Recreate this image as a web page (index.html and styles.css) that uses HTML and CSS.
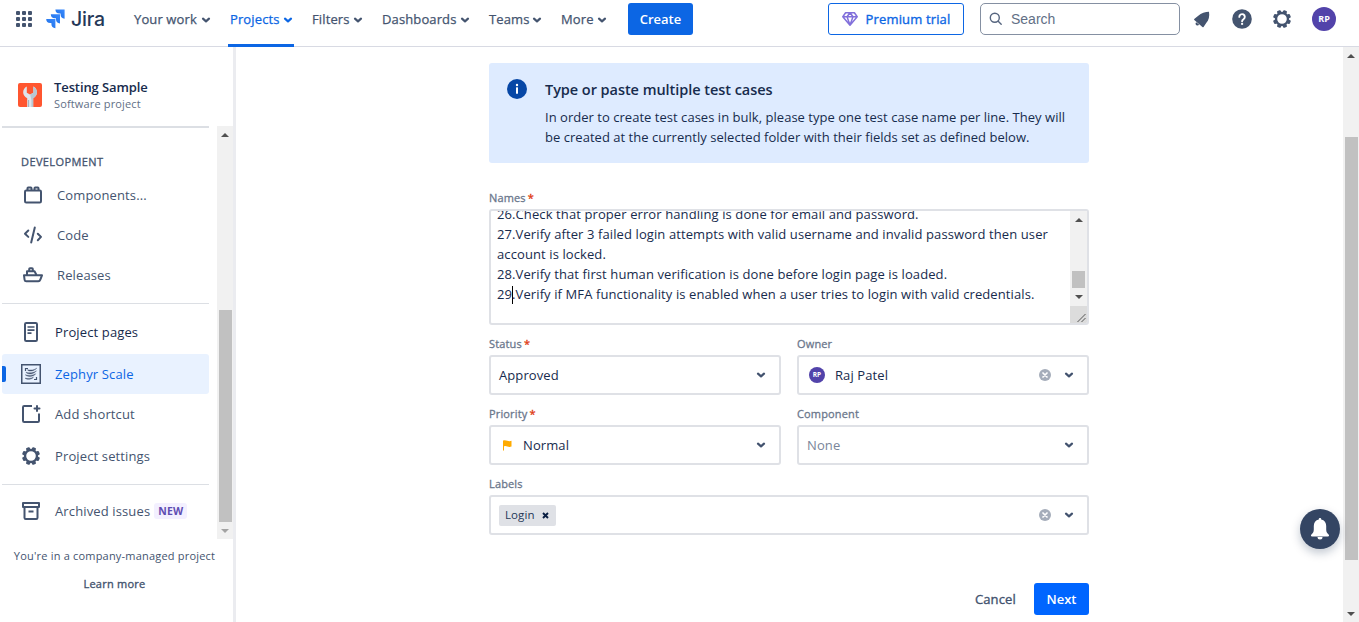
FILE: index.html
```
<!DOCTYPE html>
<html lang="en">
<head>
<meta charset="utf-8">
<title>Testing Sample - Zephyr Scale</title>
<link rel="stylesheet" href="styles.css">
</head>
<body>
<svg class="defs" width="0" height="0">
  <symbol id="chev" viewBox="0 0 10 8"><path d="M2 2.700 5 5.300 8 2.700" fill="none" stroke="currentColor" stroke-width="2.200" stroke-linecap="round" stroke-linejoin="round"/></symbol>
  <symbol id="up" viewBox="0 0 8 4"><path d="M4 0 8 4H0z" fill="currentColor"/></symbol>
  <symbol id="down" viewBox="0 0 8 4"><path d="M0 0H8L4 4z" fill="currentColor"/></symbol>
  <symbol id="gear" viewBox="0 0 20 20"><circle cx="10" cy="10" r="6" fill="none" stroke="currentColor" stroke-width="2.400"/><g fill="currentColor"><g id="teeth"><rect x="8" y="1" width="4" height="3.300" rx="1" transform="rotate(22.5 10 10)"/><rect x="8" y="1" width="4" height="3.300" rx="1" transform="rotate(67.5 10 10)"/><rect x="8" y="1" width="4" height="3.300" rx="1" transform="rotate(112.5 10 10)"/><rect x="8" y="1" width="4" height="3.300" rx="1" transform="rotate(157.5 10 10)"/></g><use href="#teeth" transform="rotate(180 10 10)"/></g></symbol>
  <symbol id="clear" viewBox="0 0 12 12"><circle cx="6" cy="6" r="6" fill="#a5adba"/><path d="M4 4 8 8M8 4 4 8" stroke="#fff" stroke-width="1.7" stroke-linecap="round"/></symbol>
</svg>

<header class="topbar">
  <svg class="switcher" width="16" height="16" viewBox="0 0 16 16" fill="#44546f"><rect width="4" height="4" rx="1"/><rect x="6" width="4" height="4" rx="1"/><rect x="12" width="4" height="4" rx="1"/><rect y="6" width="4" height="4" rx="1"/><rect x="6" y="6" width="4" height="4" rx="1"/><rect x="12" y="6" width="4" height="4" rx="1"/><rect y="12" width="4" height="4" rx="1"/><rect x="6" y="12" width="4" height="4" rx="1"/><rect x="12" y="12" width="4" height="4" rx="1"/></svg>
  <a class="brand">
    <svg width="20" height="20" viewBox="0 0 20 20"><defs><linearGradient id="jg" x1="1" y1="0" x2="0" y2="1"><stop offset="0" stop-color="#3a8bff"/><stop offset=".5" stop-color="#2a7bf0"/><stop offset="1" stop-color="#1d6fe8"/></linearGradient></defs><g fill="url(#jg)"><path d="M9.400.5H18.600v9.300a4.300 4.300 0 0 1-4-4.200V4.500h-1.200A4.100 4.100 0 0 1 9.400.5z"/><path d="M4.800 5.200H14v9.300a4.300 4.300 0 0 1-4-4.200V9.200H8.800a4.100 4.100 0 0 1-4-4z"/><path d="M.2 9.900h9.200v9.300a4.300 4.300 0 0 1-4-4.200v-1.100H4.200a4.100 4.100 0 0 1-4-4z"/></g></svg>
    <span>Jira</span>
  </a>
  <nav class="mainnav">
    <a class="n-your">Your work<svg><use href="#chev"/></svg></a>
    <a class="n-proj active">Projects<svg><use href="#chev"/></svg></a>
    <a class="n-filt">Filters<svg><use href="#chev"/></svg></a>
    <a class="n-dash">Dashboards<svg><use href="#chev"/></svg></a>
    <a class="n-team">Teams<svg><use href="#chev"/></svg></a>
    <a class="n-more">More<svg><use href="#chev"/></svg></a>
  </nav>
  <button class="create">Create</button>
  <button class="premium"><svg width="16" height="14" viewBox="0 0 16 14" fill="none" stroke="#8270db" stroke-width="1.5" stroke-linejoin="round"><path d="M3.600.8h8.800L15.200 4.800 8 13.200.8 4.800zM.8 4.800h14.400M5 4.800 8 13l3-8.200L8 .8z"/></svg><span>Premium trial</span></button>
  <div class="search"><svg width="14" height="14" viewBox="0 0 14 14" fill="none" stroke="#56657f" stroke-width="1.4" stroke-linecap="round"><circle cx="5.800" cy="5.800" r="4.500"/><path d="m9.200 9.200 3 3"/></svg><span>Search</span></div>
  <div class="tools">
    <svg class="t-bell" width="18" height="18" viewBox="0 0 18 18" fill="#44546f"><path d="M16 1.800C12.500 2 8 3 5.300 5.800L1.500 8.700c-.6.500-.6 1.200.1 1.600l7.800 6.600c.6.500 1.300.4 1.500-.3l2.300-3.500c2.700-2.700 3.500-7 2.800-11.300z"/><path d="M3.200 12.200c-1 1.100-.7 2.400.3 3 .9.500 1.900.3 2.700-.5z"/></svg>
    <svg class="t-help" width="20" height="20" viewBox="0 0 20 20"><circle cx="10" cy="10" r="9.800" fill="#44546f"/><path d="M7.300 7.900a2.750 2.750 0 1 1 4.200 2.300c-.9.600-1.400 1-1.400 2" fill="none" stroke="#fff" stroke-width="1.900" stroke-linecap="round"/><circle cx="10.100" cy="14.900" r="1.150" fill="#fff"/></svg>
    <svg class="t-gear" width="20" height="20"><use href="#gear"/></svg>
    <span class="avatar">RP</span>
  </div>
</header>

<div class="body">
  <aside class="sidebar">
    <div class="project">
      <svg width="24" height="24" viewBox="0 0 24 24"><rect width="24" height="24" rx="2" fill="#ff5630"/><path d="M8.800 3.500C4 6 3.800 12.500 9.200 15.200V24h6v-8.800c5.200-2.700 4.800-9.200.2-11.700v6.200L12 11.600 8.800 9.700z" fill="#dfe5eb"/><path d="M12.200 11.600l3.200-1.900V3.500c4.600 2.500 5 9-.2 11.700V24h-1.800v-7z" fill="#b9c7d2"/><path d="M10.600 17v7" stroke="#9eb0bf" stroke-width="1"/></svg>
      <div><div class="p-name">Testing Sample</div><div class="p-type">Software project</div></div>
    </div>
    <div class="navwrap">
      <nav class="sidenav">
        <h2>DEVELOPMENT</h2>
        <a class="item dev"><svg viewBox="0 0 20 20"><g fill="none" stroke="currentColor" stroke-width="2"><rect x="2" y="5.500" width="16" height="12" rx="1.200"/><path d="M4.500 5V3.200q0-.7.700-.7h2.600q.7 0 .7.700V5M11.500 5V3.200q0-.7.700-.7h2.600q.7 0 .7.700V5"/></g></svg><span>Components...</span></a>
        <a class="item dev"><svg viewBox="0 0 20 20"><path d="M5.300 5.500 2 8.700l3.300 3.200M14.800 8.700l3.200 3.200-3.200 3.300M11.800 2.500 8.200 17.500" fill="none" stroke="currentColor" stroke-width="2" stroke-linejoin="round" stroke-linecap="round"/></svg><span>Code</span></a>
        <a class="item dev"><svg viewBox="0 0 20 20"><path d="M1 10.300h18l-1.700 4.300q-.6 1.700-2 1.700H3.300q-1.500 0-1.700-1.500zM4 10V6.300h7.500l2 3.700M6.200 6V4q0-.8.800-.8h2q.8 0 .8.800v2" fill="none" stroke="currentColor" stroke-width="2" stroke-linejoin="round"/></svg><span>Releases</span></a>
        <hr>
        <a class="item strong"><svg viewBox="0 0 20 20"><rect x="4" y="1" width="12" height="18" rx="1.300" fill="none" stroke="currentColor" stroke-width="2"/><path d="M6.500 5h7M6.500 8.100h7M6.500 11.200h4" stroke="currentColor" stroke-width="1.700"/></svg><span>Project pages</span></a>
        <a class="item selected"><svg viewBox="0 0 20 20"><rect x=".75" y=".75" width="18.500" height="18.500" fill="none" stroke="currentColor" stroke-width="1.500"/><path d="M4.500 7V4.500H7M15.500 13v2.500H13" fill="none" stroke="currentColor" stroke-width="1.200"/><path d="M15.800 4.200C13.500 6 9.500 6.500 6.300 5.700 7.500 7.600 12 7.800 15.800 4.200zM15.500 6.800C12.500 9 8 9.400 4.800 8.200c2.500 2.800 8.200 2 10.700-1.400zM14.800 9.700C12 11.500 7.500 12 4.300 10.800c2.500 2.600 8.300 2 10.500-1.100zM12.500 13.200c-2.500 1.200-6 1.600-8.500.9 2 2.100 6.500 1.400 8.500-.9z" fill="currentColor" stroke="currentColor" stroke-width=".4"/></svg><span>Zephyr Scale</span></a>
        <a class="item"><svg viewBox="0 0 20 20"><path d="M11 2H3.200Q2 2 2 3.200v13.600Q2 18 3.200 18h13.600q1.200 0 1.200-1.200V9.500" fill="none" stroke="currentColor" stroke-width="2"/><path d="M16 2v5M13.500 4.500h5" stroke="currentColor" stroke-width="2" stroke-linecap="round"/></svg><span>Add shortcut</span></a>
        <a class="item gap"><svg viewBox="0 0 20 20"><use href="#gear"/></svg><span>Project settings</span></a>
        <hr>
        <a class="item arch"><svg viewBox="0 0 20 20"><g fill="none" stroke="currentColor" stroke-width="2" stroke-linejoin="round"><path d="M2 2h16v4H2zM3.500 6v10.800q0 1.200 1.200 1.200h10.600q1.200 0 1.200-1.200V6M7.500 10.500h5"/></g></svg><span>Archived issues</span><b class="new">NEW</b></a>
      </nav>
      <div class="sbar"><svg class="arrow"><use href="#up"/></svg><i class="thumb"></i><svg class="arrow dim"><use href="#down"/></svg></div>
    </div>
    <div class="managed">You're in a company-managed project</div>
    <div class="learn">Learn more</div>
  </aside>

  <main class="main">
    <section class="info">
      <svg width="20" height="20" viewBox="0 0 20 20"><circle cx="10" cy="10" r="10" fill="#0747a6"/><rect x="9" y="8.300" width="2" height="6.500" rx=".5" fill="#fff"/><circle cx="10" cy="6" r="1.200" fill="#fff"/></svg>
      <div>
        <h1>Type or paste multiple test cases</h1>
        <p>In order to create test cases in bulk, please type one test case name per line. They will<br>be created at the currently selected folder with their fields set as defined below.</p>
      </div>
    </section>

    <label class="lbl first">Names<em>*</em></label>
    <div class="area">
      <div class="lines">
        <div>26.Check that proper error handling is done for email and password.</div>
        <div>27.Verify after 3 failed login attempts with valid username and invalid password then user</div>
        <div>account is locked.</div>
        <div>28.Verify that first human verification is done before login page is loaded.</div>
        <div>29<i class="caret"></i>.Verify if MFA functionality is enabled when a user tries to login with valid credentials.</div>
      </div>
      <div class="areabar">
        <div class="sbar"><svg class="arrow"><use href="#up"/></svg><i class="thumb"></i><svg class="arrow"><use href="#down"/></svg></div>
        <svg class="grip" width="17" height="17" viewBox="0 0 17 17"><path d="M7.500 16 15.500 8M11.500 16l4-4" stroke="#555" stroke-width="1"/></svg>
      </div>
    </div>

    <div class="grid">
      <div><label class="lbl">Status<em>*</em></label><div class="select"><span>Approved</span><svg class="ch"><use href="#chev"/></svg></div></div>
      <div><label class="lbl">Owner</label><div class="select"><span class="avatar small">RP</span><span>Raj Patel</span><svg class="cl"><use href="#clear"/></svg><svg class="ch"><use href="#chev"/></svg></div></div>
      <div><label class="lbl">Priority<em>*</em></label><div class="select"><svg class="flag" width="9" height="11" viewBox="0 0 9 11"><path d="M0 .5Q2-.3 4.300.8 6.500 1.700 8.500.8V6.500Q6.500 7.400 4.300 6.500 2.600 5.800 1 6.300V10.500H0z" fill="#ffab00"/></svg><span>Normal</span><svg class="ch"><use href="#chev"/></svg></div></div>
      <div><label class="lbl">Component</label><div class="select none"><span>None</span><svg class="ch"><use href="#chev"/></svg></div></div>
      <div class="wide"><label class="lbl">Labels</label><div class="select"><span class="tag">Login<svg width="7" height="7" viewBox="0 0 7 7"><path d="M1 1 6 6M6 1 1 6" stroke="#091e42" stroke-width="1.900"/></svg></span><svg class="cl"><use href="#clear"/></svg><svg class="ch"><use href="#chev"/></svg></div></div>
    </div>

    <div class="actions"><button class="cancel">Cancel</button><button class="next">Next</button></div>
  </main>

  <div class="sbar page"><svg class="arrow"><use href="#up"/></svg><i class="thumb"></i><svg class="arrow"><use href="#down"/></svg></div>
</div>

<button class="notify"><svg width="20" height="24" viewBox="0 0 20 24" fill="#fff"><path d="M10 1a1.200 1.200 0 0 0-1.200 1.400C5.500 3 3.800 5.600 3.800 9v3.500c0 2.500-1 3.700-2.400 5-.8.800-.5 2 .6 2h16c1.100 0 1.400-1.200.6-2-1.400-1.300-2.400-2.500-2.400-5V9c0-3.400-1.700-6-5-6.600A1.200 1.200 0 0 0 10 1z"/><path d="M7.500 20h5a2.500 2.500 0 0 1-5 0z"/></svg></button>
</body>
</html>
```
FILE: styles.css
```
* { box-sizing: border-box; }
body {
  margin: 0;
  height: 622px;
  overflow: hidden;
  display: flex;
  flex-direction: column;
  background: #fff;
  color: #172b4d;
  font-family: "Open Sans", "Noto Sans", sans-serif;
  font-size: 13px;
  line-height: 20px;
}
.defs { position: absolute; }
svg { flex: none; }
button { font: inherit; border: 0; padding: 0; display: flex; align-items: center; justify-content: center; }

/* Top navigation */
.topbar {
  height: 47px;
  flex: none;
  border-bottom: 1px solid #d8dae3;
  display: flex;
  align-items: flex-start;
  color: #44546f;
}
.switcher { margin: 11px 0 0 16px; }
.brand { display: flex; width: 72px; margin: 9px 0 0 14px; }
.brand span {
  margin-left: 5px;
  font: 500 19.5px/20px Inter, sans-serif;
  letter-spacing: -0.2px;
  color: #253858;
}
.mainnav { display: flex; height: 47px; margin-left: 16px; letter-spacing: 0.12px; -webkit-text-stroke: 0.25px currentColor; }
.mainnav a { display: flex; align-items: flex-start; padding-top: 9px; white-space: nowrap; }
.mainnav svg { width: 10px; height: 8px; margin: 7px 0 0 auto; }
.n-your { width: 77px; margin-right: 17px; }
.n-proj { width: 66px; padding: 0 1px 0 2px; }
.n-filt { width: 51px; margin-left: 18px; }
.n-dash { width: 88px; margin-left: 19px; }
.n-team { width: 53px; margin-left: 19px; }
.n-more { width: 46px; margin-left: 19px; }
.mainnav .active { color: #0c66e4; border-bottom: 3px solid #0c66e4; }
.create {
  width: 65px;
  height: 32px;
  margin: 3px 0 0 21px;
  border-radius: 3px;
  background: #0c66e4;
  color: #fff;
  font-weight: 600;
}
.premium {
  width: 136px;
  height: 32px;
  margin: 3px 0 0 135px;
  gap: 8px;
  border: 1px solid #0c66e4;
  border-radius: 3px;
  background: #fff;
  color: #0c66e4;
  letter-spacing: 0.15px;
  -webkit-text-stroke: 0.35px currentColor;
}
.search {
  width: 200px;
  height: 32px;
  margin: 3px 0 0 16px;
  padding-left: 8px;
  display: flex;
  align-items: center;
  border: 1px solid #8590a2;
  border-radius: 5px;
  font: 14px/20px "Liberation Sans", Arial, sans-serif;
  color: #626f86;
}
.search span { margin-left: 8px; }
.tools { display: flex; align-items: center; height: 32px; margin: 3px 0 0 13px; }
.t-help { margin-left: 21px; }
.t-gear { margin-left: 20px; }
.avatar {
  width: 24px;
  height: 24px;
  margin-left: 20px;
  border-radius: 50%;
  background: #5243aa;
  color: #fff;
  font-size: 9px;
  font-weight: 700;
  line-height: 24px;
  text-align: center;
}

.body { display: flex; flex: 1; min-height: 0; }

/* Project sidebar */
.sidebar { width: 236px; border-right: 3px solid #ebecf0; color: #44546f; flex: none; }
.project { display: flex; height: 79px; padding: 30px 0 0 18px; }
.project svg { margin-top: 6px; }
.project div div { margin-left: 12px; }
.p-name { font-weight: 600; line-height: 20px; color: #172b4d; letter-spacing: -0.1px; }
.p-type { font-size: 11px; line-height: 14px; color: #626f86; letter-spacing: 0.15px; }
.navwrap { display: flex; height: 413px; justify-content: space-between; }
.sidenav { width: 207px; margin-left: 2px; border-top: 2px solid #dcdfe4; letter-spacing: 0.13px; }
.sidenav h2 { margin: 26px 0 5px 19px; font-size: 11px; line-height: 16px; font-weight: 400; letter-spacing: 0.4px; -webkit-text-stroke: 0.3px currentColor; }
.sidenav hr { margin: 8px 0; border: 0; border-top: 1px solid #dcdfe4; }
.item { display: flex; align-items: center; height: 40px; padding-left: 19px; border-radius: 3px; white-space: nowrap; }
.item svg { width: 20px; height: 20px; color: #44546f; }
.item span { margin-left: 14px; }
.dev { padding-left: 21px; }
.strong { color: #172b4d; margin-bottom: 2px; }
.selected { position: relative; background: #e9f2ff; color: #0c66e4; }
.selected::before { content: ""; position: absolute; left: 0; top: 12px; width: 4px; height: 16px; border-radius: 0 2px 2px 0; background: #0c66e4; }
.gap { margin-top: 2px; }
.arch { margin-top: -2px; }
.new { margin-left: 4px; padding: 0 4px; border-radius: 3px; background: #f3f0ff; color: #5e4db2; font-size: 10.5px; line-height: 16px; }
.managed { margin: 9px 0 0 -4px; font-size: 11px; line-height: 16px; text-align: center; letter-spacing: 0.2px; }
.learn { margin: 12px 0 0 -4px; font-size: 11px; line-height: 16px; letter-spacing: 0.25px; text-align: center; -webkit-text-stroke: 0.35px currentColor; }

/* Scrollbars */
.sbar { width: 16px; display: flex; flex-direction: column; align-items: center; background: #f1f1f1; color: #505050; }
.sbar .arrow { width: 8px; height: 4px; margin: 7px 0 6px; }
.sbar .dim { color: #a3a3a3; }
.thumb { width: 13px; background: #c1c1c1; }
.navwrap .thumb { height: 212px; margin-top: auto; }
.page { margin-left: auto; }
.page .thumb { height: 423px; margin-top: 73px; margin-bottom: auto; }

/* Test case form */
.main { width: 600px; margin: 16px 0 0 253px; }
.info { display: flex; height: 100px; padding: 16px 0 0 18px; border-radius: 3px; background: #deebff; }
.info > div { margin-left: 18px; }
.info h1 { margin: 0 0 7px; font-size: 14.5px; line-height: 21px; font-weight: 600; letter-spacing: -0.05px; }
.info p { margin: 0; white-space: nowrap; letter-spacing: 0.03px; }
.lbl { display: block; height: 16px; font-size: 11px; line-height: 16px; letter-spacing: 0.15px; color: #6b778c; -webkit-text-stroke: 0.3px currentColor; }
.lbl em { margin-left: 2px; color: #de350b; font-style: normal; }
.first { margin: 27px 0 3px; }
.area { display: flex; height: 116px; border: 2px solid #dfe1e6; border-radius: 3px; overflow: hidden; }
.lines { width: 579px; padding-left: 6px; margin-top: -7px; white-space: nowrap; letter-spacing: 0.1px; }
.caret { display: inline-block; width: 1px; height: 18px; margin-right: -1px; background: #000; vertical-align: -5px; }
.areabar { width: 17px; }
.areabar .sbar { width: 17px; height: 95px; }
.areabar .thumb { height: 17px; margin-top: auto; }
.areabar .arrow:last-child { margin-bottom: 7px; }
.grip { display: block; background: #dcdcdc; }
.grid { display: grid; grid-template-columns: 292px 292px; gap: 10px 16px; margin-top: 10px; }
.grid .lbl { height: 20px; padding-top: 1px; }
.wide { grid-column: span 2; }
.select { display: flex; align-items: center; height: 40px; padding: 0 13px 0 8px; border: 2px solid #dfe1e6; border-radius: 3px; letter-spacing: 0.1px; }
.ch { width: 10px; height: 8px; margin-left: auto; color: #42526e; }
.cl { width: 12px; height: 12px; margin-left: auto; }
.cl + .ch { margin-left: 13px; }
.small { width: 16px; height: 16px; margin: 0 10px 0 2px; font-size: 6.5px; line-height: 16px; }
.flag { margin: 0 11px 0 4px; }
.none { color: #7a869a; }
.tag { display: flex; align-items: center; gap: 7px; height: 21px; padding: 0 7px 0 6px; border-radius: 2px; background: #dfe1e6; color: #253858; font-size: 11.5px; }
.actions { display: flex; justify-content: flex-end; margin-top: 48px; }
.actions button { height: 32px; border-radius: 3px; }
.cancel { background: none; color: #42526e; margin-right: 18px; letter-spacing: 0.15px; -webkit-text-stroke: 0.35px currentColor; }
.next { width: 55px; background: #0065ff; color: #fff; font-weight: 600; }

/* Notification launcher floats over the page */
.notify { position: absolute; left: 1300px; top: 509px; width: 40px; height: 40px; border-radius: 50%; background: #344563; box-shadow: 0 4px 10px rgba(9, 30, 66, .25); }
```
